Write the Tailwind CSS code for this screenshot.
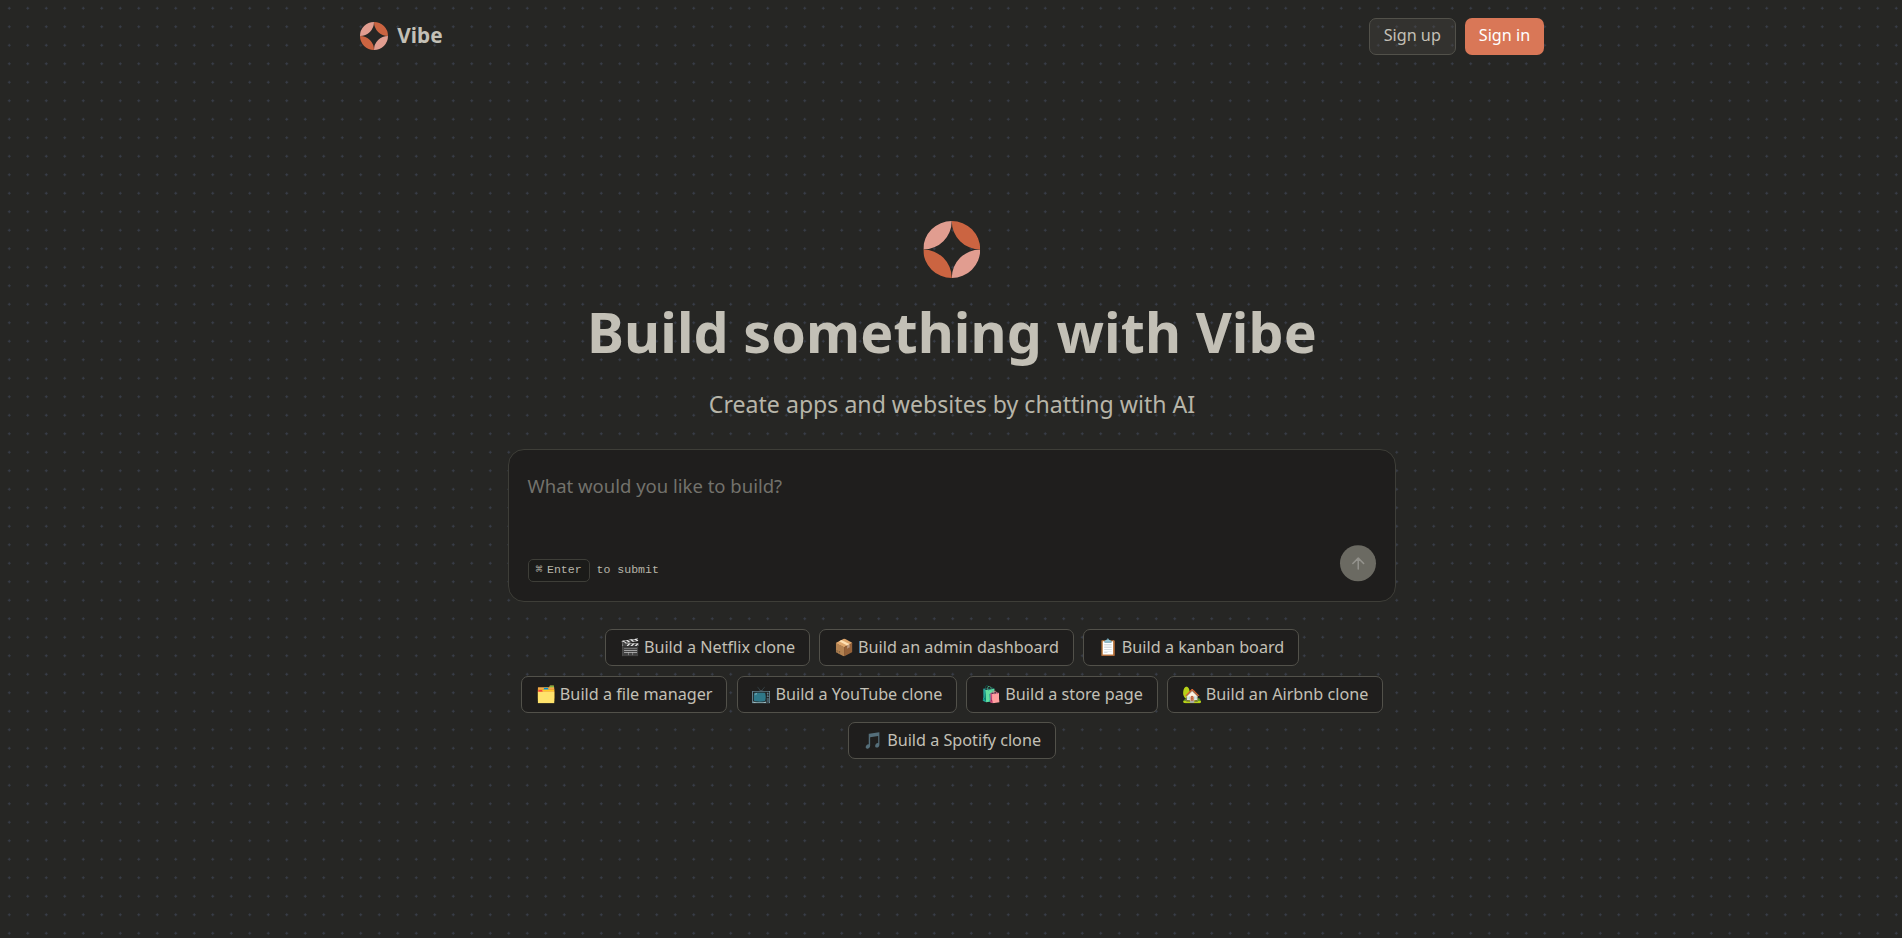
<!DOCTYPE html>
<html lang="en" class="text-[18.5px]">
<head>
<meta charset="utf-8">
<title>Vibe</title>
<script src="https://cdn.jsdelivr.net/npm/@tailwindcss/browser@4"></script>
</head>
<body class="bg-[#262624] text-[#c3c0b6] font-['Noto_Sans',sans-serif] overflow-hidden">
<svg class="hidden">
  <symbol id="logo" viewBox="0 0 100 100">
    <path fill="#e19d90" d="M50 0A50 50 0 0 0 0 50A50 50 0 0 0 50 0ZM50 100A50 50 0 0 0 100 50A50 50 0 0 0 50 100Z"/>
    <path fill="#cb6441" d="M50 0A50 50 0 0 1 100 50A50 50 0 0 1 50 0ZM50 100A50 50 0 0 1 0 50A50 50 0 0 1 50 100Z"/>
  </symbol>
</svg>
<main class="relative isolate flex h-screen flex-col pl-[2px]">
  <div class="absolute inset-0 -z-10 bg-[radial-gradient(#393e4a_1.156px,transparent_1.156px)] bg-[length:18.5px_18.5px] bg-[position:0_-1px]"></div>
  <nav class="absolute inset-x-0 top-0 px-4 pt-[18px] pl-[calc(1rem+2px)]">
    <div class="mx-auto flex w-full max-w-[64rem] items-center justify-between">
      <a class="-mt-[2px] flex items-center gap-2">
        <svg class="size-[28px]"><use href="#logo"/></svg>
        <span class="-mt-px text-[20.8px] leading-7 font-bold">Vibe</span>
      </a>
      <div class="flex gap-2">
        <button class="h-8 w-[87px] rounded-[7px] border border-[#52514a] bg-[#52514a]/30 pb-[2px] text-[16.19px]">Sign up</button>
        <button class="h-8 w-[79px] rounded-[7px] bg-[#d97757] pb-[2px] text-[16.19px] text-white">Sign in</button>
      </div>
    </div>
  </nav>
  <section class="mx-auto flex w-full max-w-[64rem] flex-col pt-[220.5px]">
    <svg class="mx-auto size-[57px] shrink-0 -translate-x-[0.75px]"><use href="#logo"/></svg>
    <h1 class="mt-[26px] text-center text-[55.5px] leading-none font-bold tracking-[0.1px]">Build something with Vibe</h1>
    <p class="mt-[28.5px] text-center text-[23.125px] leading-7 text-[#b7b5a9]">Create apps and websites by chatting with AI</p>
    <div class="mx-auto mt-[29.5px] w-full max-w-[48rem]">
      <form class="flex h-[153px] flex-col justify-between rounded-[16px] border border-[#3e3e38] bg-[#1f1e1d] px-4 pt-1 pb-[18px]">
        <div class="pt-[17px] text-[18.5px] leading-6 text-[#73726c]">What would you like to build?</div>
        <div class="flex items-end justify-between">
          <div class="-translate-y-px font-['Liberation_Mono',monospace] text-[11.56px] text-[#b7b5a9]">
            <kbd class="inline-flex h-[23px] items-center gap-1 rounded-[5px] border border-[#3e3e38] bg-[#1b1b19] px-1.5 pb-[2px] font-['Liberation_Mono',monospace] text-[11.56px]"><span>⌘</span>Enter</kbd>&nbsp;to submit
          </div>
          <div class="mr-[0.25px] flex size-[36px] -translate-y-[1.75px] items-center justify-center rounded-full bg-[#6b6a62]">
            <svg class="size-[18.5px]" viewBox="0 0 24 24" fill="none" stroke="#93928c" stroke-width="2" stroke-linecap="round" stroke-linejoin="round"><path d="m5 12 7-7 7 7M12 19V5"/></svg>
          </div>
        </div>
      </form>
      <div class="mt-[27px] flex flex-wrap justify-center gap-2 text-[16.19px] *:h-8 *:rounded-[7px] *:border *:border-[#52514a] *:bg-[#1f1e1d] *:px-[13.75px] *:pb-[0.5px] *:whitespace-nowrap">
        <button>🎬 Build a Netflix clone</button>
        <button>📦 Build an admin dashboard</button>
        <button>📋 Build a kanban board</button>
        <button>🗂️ Build a file manager</button>
        <button>📺 Build a YouTube clone</button>
        <button>🛍️ Build a store page</button>
        <button>🏡 Build an Airbnb clone</button>
        <button>🎵 Build a Spotify clone</button>
      </div>
    </div>
  </section>
</main>
</body>
</html>
